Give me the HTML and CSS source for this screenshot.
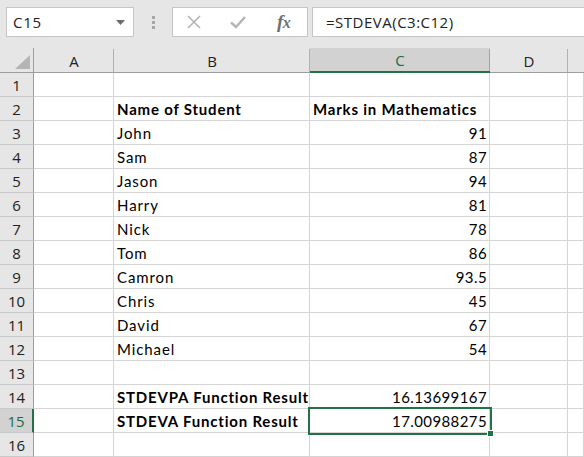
FILE: index.html
```html
<!DOCTYPE html>
<html>
<head>
<meta charset="utf-8">
<link rel="stylesheet" href="styles.css">
</head>
<body>
<div class="top">
  <div class="namebox"><span class="nb-text">C15</span><svg class="nb-arrow" width="9" height="5" viewBox="0 0 9 5"><path d="M0 0h9L4.5 5z" fill="#6b6b6b"/></svg></div>
  <div class="dots"><span></span><span></span><span></span></div>
  <div class="fbtns">
    <svg class="ic-x" width="16" height="16" viewBox="0 0 16 16"><path d="M2 2L14 14M14 2L2 14" stroke="#b4b4b4" stroke-width="1.6" fill="none"/></svg>
    <svg class="ic-check" width="18" height="16" viewBox="0 0 18 16"><path d="M2 8.5L7 13L16 3" stroke="#b4b4b4" stroke-width="2.4" fill="none"/></svg>
    <span class="fx">f<i>x</i></span>
  </div>
  <div class="finput">=STDEVA(C3:C12)</div>
</div>
<div class="sheet">
  <div class="corner"><span class="tri"></span></div>
  <div class="ch">A</div><div class="ch">B</div><div class="ch sel">C</div><div class="ch">D</div><div class="ch last"></div>

  <div class="rh">1</div><div class="c"></div><div class="c"></div><div class="c"></div><div class="c"></div><div class="c"></div>
  <div class="rh">2</div><div class="c"></div><div class="c b">Name of Student</div><div class="c b">Marks in Mathematics</div><div class="c"></div><div class="c"></div>
  <div class="rh">3</div><div class="c"></div><div class="c">John</div><div class="c n">91</div><div class="c"></div><div class="c"></div>
  <div class="rh">4</div><div class="c"></div><div class="c">Sam</div><div class="c n">87</div><div class="c"></div><div class="c"></div>
  <div class="rh">5</div><div class="c"></div><div class="c">Jason</div><div class="c n">94</div><div class="c"></div><div class="c"></div>
  <div class="rh">6</div><div class="c"></div><div class="c">Harry</div><div class="c n">81</div><div class="c"></div><div class="c"></div>
  <div class="rh">7</div><div class="c"></div><div class="c">Nick</div><div class="c n">78</div><div class="c"></div><div class="c"></div>
  <div class="rh">8</div><div class="c"></div><div class="c">Tom</div><div class="c n">86</div><div class="c"></div><div class="c"></div>
  <div class="rh">9</div><div class="c"></div><div class="c">Camron</div><div class="c n">93.5</div><div class="c"></div><div class="c"></div>
  <div class="rh">10</div><div class="c"></div><div class="c">Chris</div><div class="c n">45</div><div class="c"></div><div class="c"></div>
  <div class="rh">11</div><div class="c"></div><div class="c">David</div><div class="c n">67</div><div class="c"></div><div class="c"></div>
  <div class="rh">12</div><div class="c"></div><div class="c">Michael</div><div class="c n">54</div><div class="c"></div><div class="c"></div>
  <div class="rh">13</div><div class="c"></div><div class="c"></div><div class="c"></div><div class="c"></div><div class="c"></div>
  <div class="rh">14</div><div class="c"></div><div class="c b">STDEVPA Function Result</div><div class="c n">16.13699167</div><div class="c"></div><div class="c"></div>
  <div class="rh sel">15</div><div class="c"></div><div class="c b">STDEVA Function Result</div><div class="c n active">17.00988275<span class="handle"></span></div><div class="c"></div><div class="c"></div>
  <div class="rh">16</div><div class="c"></div><div class="c"></div><div class="c"></div><div class="c"></div><div class="c"></div>
</div>
</body>
</html>
```

FILE: styles.css
```css
* { box-sizing: border-box; }
html, body { margin: 0; padding: 0; }
body {
  width: 584px;
  height: 457px;
  overflow: hidden;
  background: #ffffff;
  font-family: "Open Sans", "Noto Sans", sans-serif;
}
.top {
  height: 48px;
  background: #e6e6e6;
  display: flex;
  align-items: flex-start;
  padding: 7px 0 0 6px;
}
.namebox {
  width: 128px;
  height: 30px;
  background: #fff;
  border: 1px solid #c6c6c6;
  display: flex;
  align-items: center;
  justify-content: space-between;
  padding: 0 8px 0 6px;
  font-size: 15px;
  letter-spacing: 0.8px;
  color: #222;
}
.nb-arrow { margin-top: 1px; }
.dots {
  width: 38px;
  height: 30px;
  display: flex;
  flex-direction: column;
  align-items: center;
  justify-content: center;
  gap: 2px;
}
.dots span { width: 3px; height: 3px; background: #a6a6a6; }
.fbtns {
  width: 136px;
  height: 30px;
  background: #fff;
  border: 1px solid #c6c6c6;
  display: flex;
  align-items: center;
  padding-left: 13px;
}
.ic-x { margin-right: 27px; }
.ic-check { margin-right: 30px; }
.fx {
  font-family: "Liberation Serif", "DejaVu Serif", serif;
  font-style: italic;
  font-weight: bold;
  font-size: 19px;
  color: #707070;
  letter-spacing: -0.5px;
}
.fx i { font-size: 16px; }
.finput {
  margin-left: 4px;
  flex: 1;
  height: 30px;
  background: #fff;
  border: 1px solid #c6c6c6;
  border-right: none;
  padding-left: 13px;
  display: flex;
  align-items: center;
  font-size: 15px;
  letter-spacing: 0.5px;
  color: #222;
}
.sheet {
  display: grid;
  grid-template-columns: 34px 80px 196px 180px 78px 16px;
  grid-template-rows: 25px repeat(16, 24px);
}
.corner, .ch {
  background: #e6e6e6;
  border-bottom: 1px solid #9e9e9e;
}
.corner {
  border-right: 1px solid #9e9e9e;
  position: relative;
}
.tri {
  position: absolute;
  right: 3px;
  bottom: 3px;
  width: 0;
  height: 0;
  border-left: 15px solid transparent;
  border-bottom: 14px solid #b5b5b5;
}
.ch {
  display: flex;
  align-items: center;
  justify-content: center;
  font-size: 15px;
  color: #222;
  padding-top: 1px;
  position: relative;
}
.ch::after {
  content: "";
  position: absolute;
  right: 0;
  top: 1px;
  bottom: 0;
  width: 1px;
  background: #b1b1b1;
}
.ch.last::after { display: none; }
.ch.sel {
  background: #d2d2d2;
  color: #1e6b3f;
  border-bottom: 2px solid #217346;
}
.ch.sel::after { background: #a3a3a3; }
.rh {
  background: #e6e6e6;
  border-right: 1px solid #9e9e9e;
  border-bottom: 1px solid #c9c9c9;
  display: flex;
  align-items: center;
  justify-content: center;
  font-size: 15px;
  color: #222;
  padding-top: 1px;
}
.rh.sel {
  background: #d2d2d2;
  color: #1e6b3f;
  border-right: 2px solid #217346;
}
.c {
  border-right: 1px solid #d4d4d4;
  border-bottom: 1px solid #d4d4d4;
  font-family: "Lato", "Open Sans", sans-serif;
  font-size: 15px;
  letter-spacing: 0.9px;
  color: #000;
  display: flex;
  align-items: flex-end;
  padding: 0 3px 2px 3px;
  white-space: nowrap;
}
.c.b { font-weight: bold; letter-spacing: 0.8px; }
.c.n { justify-content: flex-end; letter-spacing: 0.4px; padding-right: 2px; }
.c.active {
  position: relative;
  z-index: 1;
  outline: 2px solid #217346;
  outline-offset: 0;
}
.handle {
  position: absolute;
  right: -5px;
  bottom: -5px;
  width: 7px;
  height: 7px;
  background: #217346;
  border: 1px solid #fff;
}
```
